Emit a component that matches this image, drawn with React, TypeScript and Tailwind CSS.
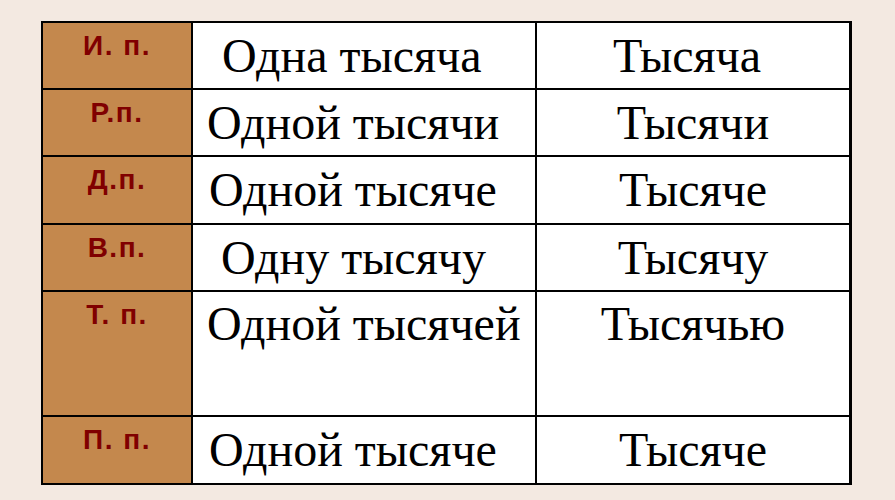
const rows = [
  { label: "И. п.", main: "Одна тысяча", alt: "Тысяча", pl: "pl-[29px]", altPad: "pr-[12px]", h: "h-[65px]", top: false },
  { label: "Р.п.", main: "Одной тысячи", alt: "Тысячи", pl: "pl-[14px]", altPad: "", h: "h-[65px]", top: false },
  { label: "Д.п.", main: "Одной тысяче", alt: "Тысяче", pl: "pl-[16px]", altPad: "", h: "h-[66px]", top: false },
  { label: "В.п.", main: "Одну тысячу", alt: "Тысячу", pl: "pl-[28px]", altPad: "", h: "h-[65px]", top: false },
  { label: "Т. п.", main: "Одной тысячей", alt: "Тысячью", pl: "pl-[14px]", altPad: "", h: "h-[123px]", top: true },
  { label: "П. п.", main: "Одной тысяче", alt: "Тысяче", pl: "pl-[16px]", altPad: "", h: "h-[66px]", top: false },
];

export default function App() {
  return (
    <div className="w-[895px] h-[500px] bg-[#f3e9e1] pl-[41px] pt-[21px]">
      <div className="w-[811px] bg-black p-[2px] flex flex-col gap-[2px]">
        {rows.map((r) => (
          <div key={r.label} className={`flex gap-[2px] ${r.h}`}>
            <div className="w-[148px] bg-[#c4884d] flex justify-center pt-[9px]">
              <span className="font-['Liberation_Sans',Arial,sans-serif] font-bold text-[28px] leading-[28px] tracking-[1.5px] text-[#800000]">
                {r.label}
              </span>
            </div>
            <div
              className={`w-[342px] bg-white flex ${r.pl} ${r.top ? "items-start pt-[6px]" : "items-center"}`}
            >
              <span className="font-['Liberation_Serif','Times_New_Roman',serif] text-[48px] leading-[52px] text-black">
                {r.main}
              </span>
            </div>
            <div
              className={`w-[312px] bg-white flex justify-center ${r.altPad} ${r.top ? "items-start pt-[6px]" : "items-center"}`}
            >
              <span className="font-['Liberation_Serif','Times_New_Roman',serif] text-[48px] leading-[52px] text-black">
                {r.alt}
              </span>
            </div>
          </div>
        ))}
      </div>
    </div>
  );
}
